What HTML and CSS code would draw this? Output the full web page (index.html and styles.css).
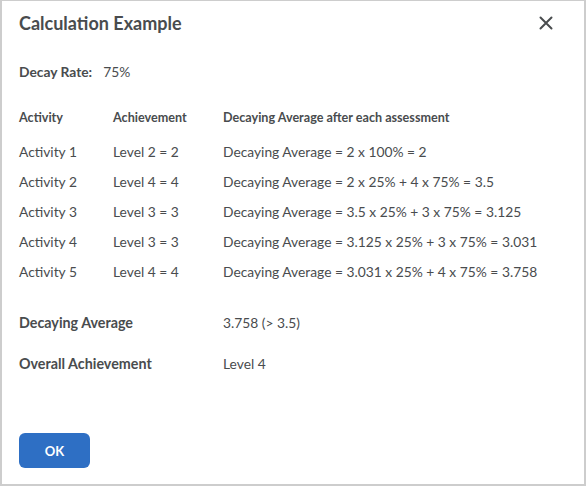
FILE: index.html
```html
<!DOCTYPE html>
<html lang="en">
<head>
  <meta charset="UTF-8">
  <title>Calculation Example</title>
  <link rel="stylesheet" href="styles.css">
</head>
<body>
  <div class="dialog">
    <div class="dialog-header">
      <h1>Calculation Example</h1>
      <button class="close" aria-label="Close">
        <svg width="14" height="14" viewBox="0 0 14 14">
          <path d="M1.5 1.5 L12.5 12.5 M12.5 1.5 L1.5 12.5" stroke="#494c4e" stroke-width="2" stroke-linecap="round" />
        </svg>
      </button>
    </div>

    <div class="decay-rate">
      <span class="label">Decay Rate:</span>
      <span>75%</span>
    </div>

    <div class="calc-table">
      <div class="th">Activity</div>
      <div class="th">Achievement</div>
      <div class="th">Decaying Average after each assessment</div>

      <div>Activity 1</div>
      <div>Level 2 = 2</div>
      <div>Decaying Average = 2 x 100% = 2</div>

      <div>Activity 2</div>
      <div>Level 4 = 4</div>
      <div>Decaying Average = 2 x 25% + 4 x 75% = 3.5</div>

      <div>Activity 3</div>
      <div>Level 3 = 3</div>
      <div>Decaying Average = 3.5 x 25% + 3 x 75% = 3.125</div>

      <div>Activity 4</div>
      <div>Level 3 = 3</div>
      <div>Decaying Average = 3.125 x 25% + 3 x 75% = 3.031</div>

      <div>Activity 5</div>
      <div>Level 4 = 4</div>
      <div>Decaying Average = 3.031 x 25% + 4 x 75% = 3.758</div>
    </div>

    <div class="summary">
      <div class="label">Decaying Average</div>
      <div>3.758 (&gt; 3.5)</div>
      <div class="label">Overall Achievement</div>
      <div>Level 4</div>
    </div>

    <div class="dialog-footer">
      <button class="ok">OK</button>
    </div>
  </div>
</body>
</html>
```

FILE: styles.css
```css
* {
  box-sizing: border-box;
  margin: 0;
  padding: 0;
}

body {
  background: #cdcdcd;
  font-family: Lato, 'Open Sans', sans-serif;
  color: #494c4e;
  width: 586px;
  height: 486px;
  padding: 1px 2px 2px 2px;
}

.dialog {
  background: #ffffff;
  height: 100%;
  display: flex;
  flex-direction: column;
  padding: 0 17px;
}

.dialog-header {
  display: flex;
  justify-content: space-between;
  align-items: center;
  height: 44px;
}

.dialog-header h1 {
  font-size: 18px;
  font-weight: 700;
}

.close {
  background: none;
  border: none;
  width: 30px;
  height: 30px;
  display: flex;
  align-items: center;
  justify-content: center;
  margin-right: 6px;
  cursor: pointer;
}

.decay-rate {
  margin-top: 18px;
  font-size: 13.8px;
  display: flex;
  gap: 11px;
}

.label {
  font-weight: 700;
}

.calc-table {
  margin-top: 22px;
  display: grid;
  grid-template-columns: 94px 110px 1fr;
  grid-template-rows: 34px;
  grid-auto-rows: 30px;
  align-items: center;
  font-size: 13.8px;
}

.calc-table .th {
  font-size: 12.6px;
  font-weight: 700;
  padding-bottom: 4px;
}

.summary {
  margin-top: 16px;
  display: grid;
  grid-template-columns: 204px 1fr;
  grid-auto-rows: 41px;
  align-items: center;
  font-size: 13.8px;
}

.summary .label {
  font-size: 14.3px;
}

.dialog-footer {
  margin-top: auto;
  padding-bottom: 16px;
}

.ok {
  width: 71px;
  height: 35px;
  border: none;
  border-radius: 6px;
  background: #2e6fc4;
  color: #ffffff;
  font-family: Lato, sans-serif;
  font-weight: 700;
  font-size: 13px;
  cursor: pointer;
}
```
